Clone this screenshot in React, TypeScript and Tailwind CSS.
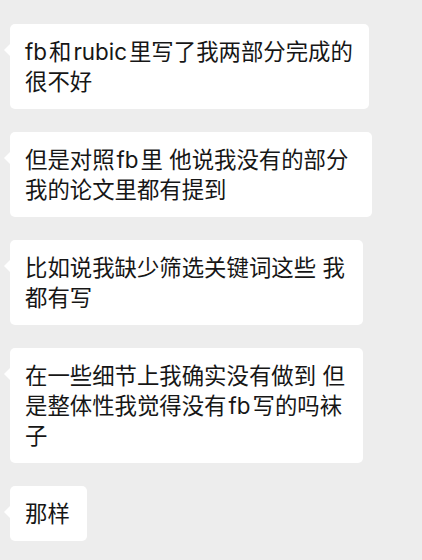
import React from "react";

type Msg = { lines: string[]; width: string };

const messages: Msg[] = [
  { lines: ["fb和rubic里写了我两部分完成的", "很不好"], width: "w-[359px]" },
  { lines: ["但是对照fb里 他说我没有的部分", "我的论文里都有提到"], width: "w-[362px]" },
  { lines: ["比如说我缺少筛选关键词这些 我", "都有写"], width: "w-[353px]" },
  { lines: ["在一些细节上我确实没有做到 但", "是整体性我觉得没有fb写的吗袜", "子"], width: "w-[353px]" },
  { lines: ["那样"], width: "w-[77px]" },
];

// Latin runs get a little breathing room next to CJK characters
function Line({ text }: { text: string }) {
  const parts = text.split(/([A-Za-z]+)/);
  return (
    <div className="whitespace-nowrap text-[22.4px] leading-[30px] text-[#161616]">
      {parts.map((p, i) => {
        if (!/^[A-Za-z]+$/.test(p)) return <React.Fragment key={i}>{p}</React.Fragment>;
        const atStart = parts.slice(0, i).join("") === "";
        return (
          <span key={i} className={atStart ? "mr-[2px]" : "mx-[2px]"}>
            {p}
          </span>
        );
      })}
    </div>
  );
}

function Bubble({ msg }: { msg: Msg }) {
  return (
    <div className={`relative ${msg.width} rounded-[5px] bg-white pl-[15px] pr-[8px] pt-[13px] pb-[12px]`}>
      {/* left-pointing tail */}
      <div className="absolute left-[-6px] top-[20px] h-0 w-0 border-y-[6px] border-r-[6px] border-y-transparent border-r-white" />
      {msg.lines.map((line, i) => (
        <Line key={i} text={line} />
      ))}
    </div>
  );
}

export default function App() {
  return (
    <div
      className="flex h-[560px] w-[422px] flex-col items-start gap-[23px] overflow-hidden bg-[#ededed] pl-[10px] pt-[24px]"
      style={{ fontFamily: '"Inter", "Noto Sans CJK SC", sans-serif' }}
    >
      {messages.map((m, i) => (
        <Bubble key={i} msg={m} />
      ))}
    </div>
  );
}
